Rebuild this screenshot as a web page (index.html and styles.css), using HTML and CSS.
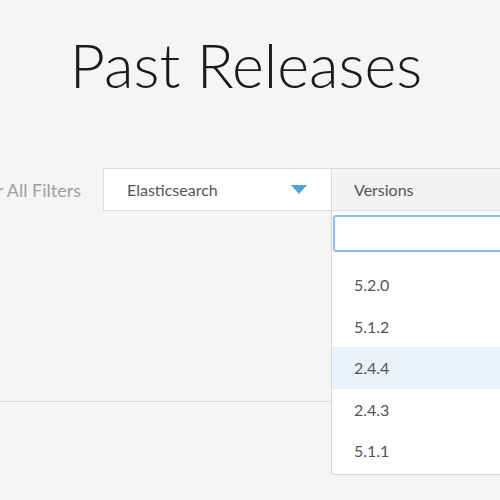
FILE: index.html
```html
<!DOCTYPE html>
<html>
<head>
<meta charset="utf-8">
<link rel="stylesheet" href="styles.css">
</head>
<body>
<h1 class="title">Past Releases</h1>
<div class="filters">
  <div class="clear">Clear All Filters</div>
  <div class="select product">
    <span>Elasticsearch</span>
    <svg class="caret" width="16" height="9" viewBox="0 0 16 9"><path d="M0 0H16L8 9Z" fill="#4aa8e0"/></svg>
  </div>
  <div class="select versions">
    <span>Versions</span>
    <div class="menu">
      <div class="search"></div>
      <ul class="options">
        <li>5.2.0</li>
        <li>5.1.2</li>
        <li class="active">2.4.4</li>
        <li>2.4.3</li>
        <li>5.1.1</li>
      </ul>
    </div>
  </div>
</div>
<div class="results"></div>
</body>
</html>
```
FILE: styles.css
```css
html, body {
  margin: 0;
  padding: 0;
  background: #f5f5f5;
  overflow: hidden;
  font-family: Lato, "Open Sans", sans-serif;
}
body {
  width: 500px;
  height: 500px;
}
.title {
  margin: 0;
  padding: 25px 8px 0 0;
  height: 168px;
  box-sizing: border-box;
  text-align: center;
  font-weight: 300;
  font-size: 61px;
  line-height: 80px;
  color: #1a1a1a;
  white-space: nowrap;
}
.filters {
  display: grid;
  grid-template-columns: 103px 228px 200px;
  height: 43px;
  width: 500px;
}
.clear {
  display: flex;
  justify-content: flex-end;
  align-items: center;
  padding-right: 22px;
  color: #a0a0a0;
  font-size: 18px;
  white-space: nowrap;
  overflow: visible;
}
.select {
  box-sizing: border-box;
  display: flex;
  align-items: center;
  font-size: 16px;
  color: #555;
  border: 1px solid #dcdcdc;
}
.product {
  background: #fff;
  padding: 0 24px 0 23px;
  justify-content: space-between;
  border-right: none;
}
.versions {
  position: relative;
  background: #f4f4f4;
  padding-left: 22px;
  border-right: none;
}
.menu {
  position: absolute;
  top: 42px;
  left: -1px;
  width: 200px;
  height: 264px;
  box-sizing: border-box;
  background: #fff;
  border: 1px solid #d6d6d6;
  border-right: none;
  border-top: none;
  border-bottom-left-radius: 4px;
  padding-top: 4px;
  z-index: 2;
}
.search {
  height: 37px;
  box-sizing: border-box;
  border: 2px solid #8fbdf3;
  border-right: none;
  border-radius: 3px 0 0 3px;
  margin-left: 1px;
  background: #fff;
}
.options {
  list-style: none;
  margin: 12px 0 0;
  padding: 0;
}
.options li {
  height: 41.5px;
  line-height: 41.5px;
  padding-left: 22px;
  font-size: 16px;
  color: #555;
}
.options li.active {
  background: #eaf3fb;
}
.results {
  height: 190px;
  border-bottom: 1px solid #dcdcdc;
}
```
